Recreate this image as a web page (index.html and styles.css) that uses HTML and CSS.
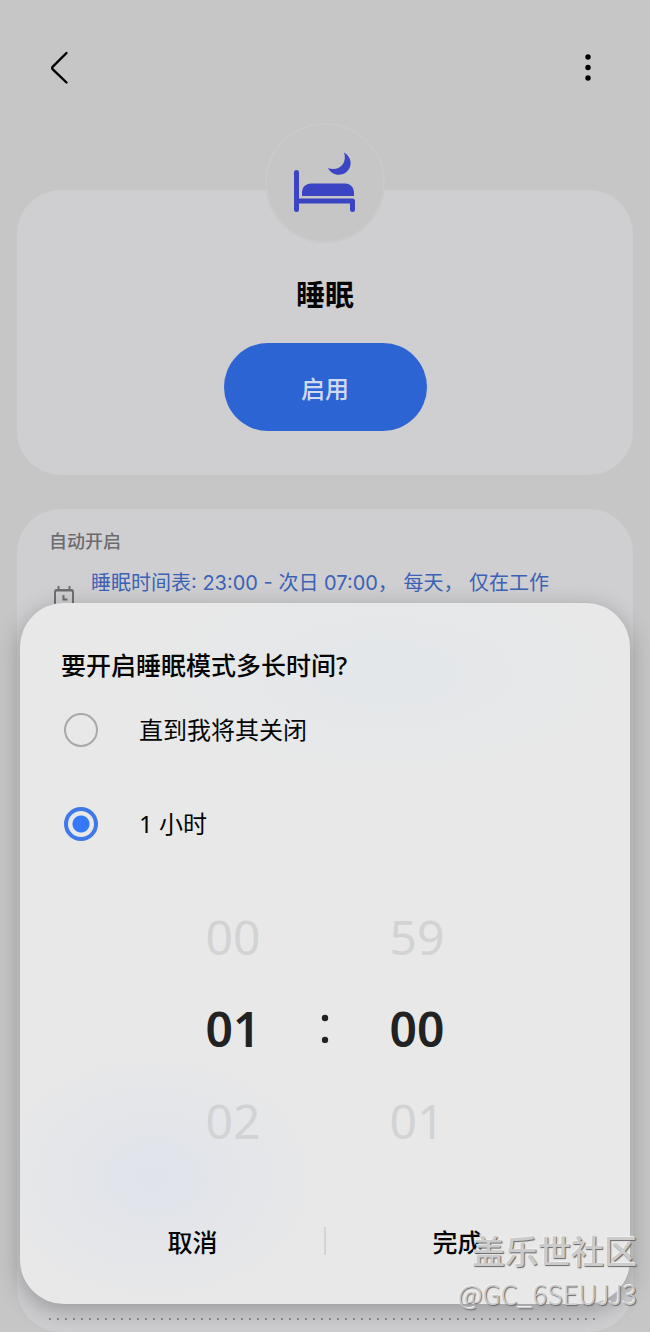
FILE: index.html
```html
<!DOCTYPE html>
<html lang="zh-CN">
<head>
<meta charset="utf-8">
<meta name="viewport" content="width=device-width, initial-scale=1">
<title>睡眠</title>
<link rel="stylesheet" href="styles.css">
</head>
<body>
<div class="page">
  <header class="topbar">
    <button class="icon-button" type="button" aria-label="返回">
      <svg width="36" height="36" viewBox="0 0 36 36" fill="none" stroke="#000" stroke-width="2.4" stroke-linecap="round" stroke-linejoin="round"><path d="M26.500 4 12.800 17.600Q11.600 19 12.800 20.400L26.500 33.500"/></svg>
    </button>
    <button class="icon-button" type="button" aria-label="更多选项">
      <svg width="36" height="36" viewBox="0 0 36 36" fill="#000"><circle cx="18" cy="8" r="2.700"/><circle cx="18" cy="18.500" r="2.700"/><circle cx="18" cy="29" r="2.700"/></svg>
    </button>
  </header>

  <main class="content">
    <section class="card mode-card">
      <div class="mode-badge">
        <svg width="64" height="62" viewBox="0 0 64 62" fill="#3b45c4">
          <path d="M51 0.500C58.500 5 60 13.500 54 19.500C48 25 38.500 23.500 35 16C41 18.200 47 16.500 50 12C52.200 8.500 52.400 4.500 51 0.500Z"/>
          <path d="M9 44V41C9 35 13 31.500 18 31.500H52C58 31.500 61 36 61 41V44Z"/>
          <path d="M1 20.500a2.500 2.500 0 0 1 5 0V46.500H59.500Q62 46.500 62 49V57.500a2.500 2.500 0 0 1-5 0V51.500H6V57.500a2.500 2.500 0 0 1-5 0Z"/>
        </svg>
      </div>
      <h1 class="mode-title">睡眠</h1>
      <button class="enable-button" type="button">启用</button>
    </section>

    <section class="card auto-card">
      <h2 class="auto-title">自动开启</h2>
      <div class="schedule">
        <svg class="schedule-icon" width="20" height="22" viewBox="0 0 20 22" fill="none" stroke="#6f6f73" stroke-width="2"><rect x="1" y="4" width="18" height="17" rx="2"/><path d="M1 4.500H19M4.500 0V5M15.500 0V5" /><path d="M9.500 9V13.500H13.500"/></svg>
        <a class="schedule-link" href="#">睡眠时间表: 23:00 - 次日 07:00， 每天， 仅在工作</a>
      </div>
      <div class="divider"></div>
    </section>
  </main>
</div>

<form class="dialog" role="dialog" aria-labelledby="dialog-title">
  <h2 class="dialog-title" id="dialog-title">要开启睡眠模式多长时间?</h2>
  <div class="options">
    <label class="option"><input class="radio" type="radio" name="duration"><span>直到我将其关闭</span></label>
    <label class="option"><input class="radio" type="radio" name="duration" checked><span>1 小时</span></label>
  </div>
  <div class="picker">
    <div class="wheel">
      <button class="wheel-step" type="button">00</button>
      <input class="wheel-value" type="text" aria-label="小时" value="01">
      <button class="wheel-step" type="button">02</button>
    </div>
    <svg class="colon" width="8" height="30" viewBox="0 0 8 30" fill="#222"><circle cx="4" cy="5" r="3.200"/><circle cx="4" cy="27" r="3.200"/></svg>
    <div class="wheel">
      <button class="wheel-step" type="button">59</button>
      <input class="wheel-value" type="text" aria-label="分钟" value="00">
      <button class="wheel-step" type="button">01</button>
    </div>
  </div>
  <div class="actions">
    <button class="action" type="button">取消</button>
    <span class="action-divider"></span>
    <button class="action" type="button">完成</button>
  </div>
</form>

<div class="watermark">
  <span class="watermark-name">盖乐世社区</span>
  <span class="watermark-user">@GC_6SEUJJ3</span>
</div>
</body>
</html>
```
FILE: styles.css
```css
* { box-sizing: border-box; }

body {
  margin: 0;
  background: #c6c6c6;
  color: #050505;
  font-family: "Noto Sans", "Noto Sans CJK SC", sans-serif;
}

button, input { font: inherit; color: inherit; }
button { border: 0; padding: 0; background: none; cursor: pointer; }
h1, h2 { margin: 0; }
svg { display: block; }

.page {
  display: flex;
  flex-direction: column;
  min-height: 100vh;
}

.topbar {
  display: flex;
  justify-content: space-between;
  padding: 49px 44px 105px 40px;
}

.icon-button { width: 36px; height: 36px; }

.content {
  flex: 1;
  display: flex;
  flex-direction: column;
  gap: 34px;
  padding: 0 17px;
}

.card {
  border-radius: 44px;
  background: #cfcfd2;
}

.mode-card {
  display: flex;
  flex-direction: column;
  align-items: center;
  padding-bottom: 44px;
}

.mode-badge {
  display: flex;
  align-items: center;
  justify-content: center;
  width: 120px;
  height: 120px;
  margin-top: -67px;
  border: 2px solid #cacaca;
  border-radius: 50%;
  background: #c6c6c6;
}

.mode-title {
  margin-top: 32px;
  font-size: 29px;
  font-weight: 700;
  line-height: 40px;
}

.enable-button {
  width: 203px;
  height: 88px;
  margin-top: 28px;
  border-radius: 44px;
  background: #2c64d4;
  color: #d0daf0;
  font-size: 24px;
  font-weight: 500;
}

.auto-card {
  flex: 1;
  display: flex;
  flex-direction: column;
  padding: 20px 32px 12px;
}

.auto-title {
  color: #6c6c70;
  font-size: 18px;
  font-weight: 500;
  line-height: 24px;
}

.schedule {
  display: flex;
  align-items: flex-start;
  gap: 17px;
  margin-top: 16px;
  padding-left: 5px;
}

.schedule-icon { flex: none; margin-top: 17px; }

.schedule-link {
  color: #3b62b5;
  font-family: Inter, "Noto Sans CJK SC", sans-serif;
  font-size: 20px;
  line-height: 28px;
  text-decoration: none;
}

.divider {
  height: 2px;
  margin-top: auto;
  background: repeating-linear-gradient(90deg, #8c8c92 0 2px, transparent 2px 8px);
}

.dialog {
  position: absolute;
  right: 20px;
  bottom: 28px;
  left: 20px;
  padding: 44px 41px 35px;
  border-radius: 44px;
  background:
    radial-gradient(ellipse 170px 130px at 22% 82%, #dfe3eb, transparent),
    radial-gradient(ellipse 250px 110px at 60% 10%, #e3e7ea, transparent),
    #e8e8e8;
  box-shadow: 0 6px 24px rgba(0, 0, 0, 0.28);
}

.dialog-title {
  font-size: 25px;
  font-weight: 500;
  line-height: 36px;
}

.options {
  display: flex;
  flex-direction: column;
  gap: 58px;
  margin-top: 29px;
}

.option {
  display: flex;
  align-items: center;
  gap: 41px;
  padding-left: 3px;
  font-size: 24px;
  line-height: 36px;
}

.radio {
  appearance: none;
  flex: none;
  width: 34px;
  height: 34px;
  margin: 0;
  border: 2px solid #a8a8a8;
  border-radius: 50%;
}

.radio:checked {
  border: 4px solid #3f78e8;
  background: radial-gradient(circle, #3579f6 8px, transparent 9px);
}

.picker {
  display: flex;
  align-items: center;
  justify-content: center;
  gap: 40px;
  margin-top: 48px;
}

.wheel {
  display: flex;
  flex-direction: column;
  align-items: center;
  width: 96px;
}

.wheel-step, .wheel-value {
  width: 96px;
  height: 92px;
  font-size: 48px;
  text-align: center;
}

.wheel-step { color: #d2d3d4; }

.wheel-value {
  border: 0;
  padding: 0;
  background: none;
  color: #222;
  font-weight: 600;
}

.actions {
  display: flex;
  align-items: center;
  margin-top: 47px;
}

.action {
  flex: 1;
  height: 56px;
  font-size: 25px;
  font-weight: 500;
}

.action-divider {
  width: 2px;
  height: 28px;
  background: #d4d4d4;
}

.watermark {
  position: absolute;
  right: 13px;
  bottom: 18px;
  display: flex;
  flex-direction: column;
  align-items: flex-end;
  color: #cbcbcb;
  text-shadow: 1px 1px 1px #666, -1px -1px 0 #f0f0f0;
  pointer-events: none;
}

.watermark-name {
  font-size: 33px;
  font-weight: 500;
  line-height: 44px;
}

.watermark-user {
  font-family: "Noto Sans CJK SC", sans-serif;
  font-size: 27px;
  font-weight: 300;
  line-height: 40px;
}
```
